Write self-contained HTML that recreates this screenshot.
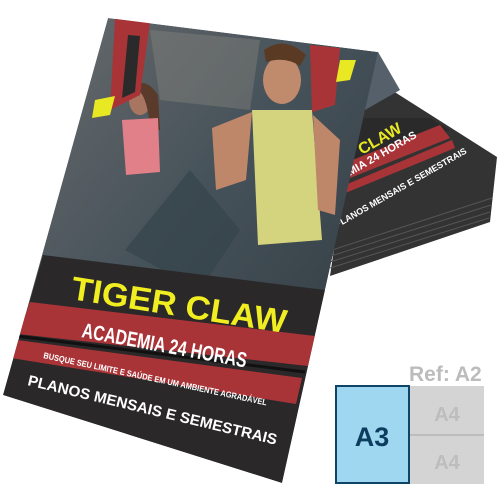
<!DOCTYPE html>
<html><head><meta charset="utf-8"><style>
html,body{margin:0;padding:0;background:#fff;width:500px;height:500px;overflow:hidden}
svg{display:block}
text{font-family:"Liberation Sans",sans-serif;font-weight:bold}
</style></head><body>
<svg width="500" height="500" viewBox="0 0 500 500">
<defs>
<linearGradient id="ph" x1="0" y1="0" x2="1" y2="1">
<stop offset="0" stop-color="#6b6d6e"/><stop offset=".45" stop-color="#46525a"/><stop offset="1" stop-color="#2c353b"/>
</linearGradient>
<clipPath id="fc"><polygon points="108,18 378,52 282,483 3,395"/></clipPath>
</defs>
<polygon points="360,70 497,157 490,222 330,276" fill="#333"/>
<path d="M330,262 L490,212 M330,268 L489,218 M331,256 L491,205 M332,250 L492,198" stroke="#555" stroke-width="1"/>
<polygon points="360,60 378,52 400,90 365,110" fill="#55606a"/>
<polygon points="345,118 430,118 450,130 345,165" fill="#2b2a2b"/>
<polygon points="340,165 440,125 450,138 340,182" fill="#a93438"/>
<polygon points="338,188 452,140 455,148 338,196" fill="#a93438"/>
<text x="0" y="0" font-size="16" fill="#e8e823" transform="translate(362,155) rotate(-30)">CLAW</text>
<text x="0" y="0" font-size="11" fill="#fff" transform="translate(350,176) rotate(-30)">MIA 24 HORAS</text>
<text x="0" y="0" font-size="9" fill="#fff" transform="translate(337,228) rotate(-30)">PLANOS MENSAIS E SEMESTRAIS</text>
<g clip-path="url(#fc)">
<polygon points="108,18 378,52 282,483 3,395" fill="url(#ph)"/>
<polygon points="150,30 260,40 250,110 160,100" fill="#8a8780" opacity=".4"/>
<polygon points="125,250 190,170 240,230 200,290" fill="#34454a" opacity=".7"/>
<ellipse cx="140" cy="100" rx="11" ry="15" fill="#a87560"/>
<path d="M130,88 Q145,75 158,95 L160,130 L150,130 Q148,100 140,92 Z" fill="#5a3a2a"/>
<polygon points="122,120 158,118 160,172 126,175" fill="#e2808a"/>
<ellipse cx="282" cy="80" rx="19" ry="24" fill="#c08a6c"/>
<path d="M264,50 Q285,35 306,55 L300,66 Q285,56 266,62 Z" fill="#5a3a22"/>
<polygon points="252,110 312,110 322,240 258,245" fill="#d4d37e"/>
<polygon points="212,128 252,112 246,180 216,190" fill="#bf876a"/>
<polygon points="313,115 340,140 335,215 318,210" fill="#bf876a"/>
<polygon points="115,18 150,22 140,95 110,110" fill="#a93438"/>
<polygon points="128,35 140,36 135,92 122,98" fill="#2a2a2a"/>
<polygon points="95,100 115,96 110,115 92,118" fill="#e8e823"/>
<polygon points="310,45 340,48 335,105 312,112" fill="#a93438"/>
<polygon points="340,60 356,60 350,80 336,82" fill="#e8e823"/>
<polygon points="43,255 325,290 282,483 3,395" fill="#2a2829"/>
<polygon points="30,302 315,336 308,366 18,334" fill="#a93438"/>
<polygon points="17,340 302,378 296,404 11,358" fill="#a93438"/>
<line x1="16" y1="336" x2="305" y2="372" stroke="#111" stroke-width="3"/>
</g>
<text x="0" y="0" font-size="33" fill="#f0ee20" transform="translate(70,299) rotate(9) scale(1.05,1)">TIGER CLAW</text>
<text x="0" y="0" font-size="21" fill="#fff" transform="translate(81,337) rotate(10.5) scale(.75,1)">ACADEMIA 24 HORAS</text>
<text x="0" y="0" font-size="8.5" fill="#fff" transform="translate(43,358) rotate(12) scale(.88,1)">BUSQUE SEU LIMITE E SAÚDE EM UM AMBIENTE AGRADÁVEL</text>
<text x="0" y="0" font-size="15" fill="#fff" transform="translate(27,385) rotate(13.5) scale(1.02,1)">PLANOS MENSAIS E SEMESTRAIS</text>
<text x="409" y="381" font-size="21" fill="#bcbcbc">Ref: A2</text>
<rect x="409" y="386" width="75" height="98" fill="#d4d4d4"/>
<line x1="409" y1="435" x2="484" y2="435" stroke="#b5b5b5" stroke-width="1.5"/>
<text x="447" y="421" font-size="20" fill="#bdbdbd" text-anchor="middle">A4</text>
<text x="447" y="469" font-size="20" fill="#bdbdbd" text-anchor="middle">A4</text>
<rect x="336" y="386" width="73" height="97" fill="#9fd6f0" stroke="#0e4566" stroke-width="2"/>
<text x="372" y="446" font-size="27" fill="#0d3d5e" text-anchor="middle">A3</text>
</svg>
</body></html>
